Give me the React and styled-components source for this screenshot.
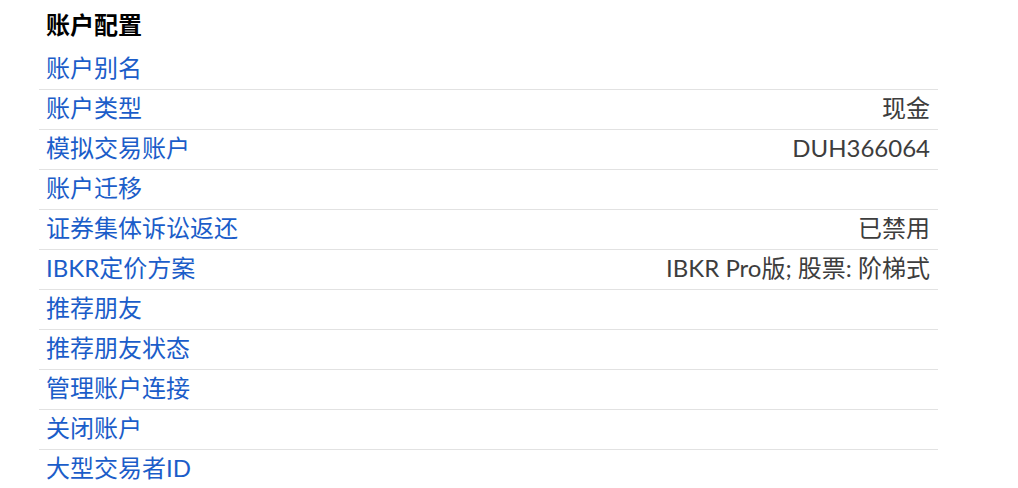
import React from 'react'
import styled, { createGlobalStyle } from 'styled-components';

const GlobalStyles = createGlobalStyle`
    body {
        margin: 0;
        background: #fff;
        font-family: "Lato", "Noto Sans CJK SC", sans-serif;
    }
`;

const Panel = styled.div`
    width: 899px;
    margin-left: 39px;
`;

const Title = styled.h3`
    margin: 0;
    height: 49px;
    display: flex;
    align-items: center;
    padding: 0 7px 2px;
    box-sizing: border-box;
    font-size: 24px;
    font-weight: 700;
    color: #000;
    font-family: "Noto Sans CJK SC", sans-serif;
`;

const Row = styled.div`
    height: 40px;
    display: flex;
    align-items: center;
    justify-content: space-between;
    padding: 0 8px 2px 7px;
    border-top: ${p => p.$first ? 'none' : '1px solid #e2e2e2'};
    box-sizing: border-box;
    line-height: 1.2;
`;

const Label = styled.a`
    color: #1b5dc9;
    font-size: 24px;
    text-decoration: none;
    cursor: pointer;
`;

const Value = styled.span`
    color: #3d3d3d;
    font-size: 24px;
`;

const rows = [
    ['账户别名', ''],
    ['账户类型', '现金'],
    ['模拟交易账户', 'DUH366064'],
    ['账户迁移', ''],
    ['证券集体诉讼返还', '已禁用'],
    ['IBKR定价方案', 'IBKR Pro版; 股票: 阶梯式'],
    ['推荐朋友', ''],
    ['推荐朋友状态', ''],
    ['管理账户连接', ''],
    ['关闭账户', ''],
    ['大型交易者ID', ''],
];

export default function App() {
    return (
        <>
            <GlobalStyles />
            <Panel>
                <Title>账户配置</Title>
                {rows.map(([label, value], i) => (
                    <Row key={label} $first={i === 0}>
                        <Label>{label}</Label>
                        {value && <Value>{value}</Value>}
                    </Row>
                ))}
            </Panel>
        </>
    )
}
